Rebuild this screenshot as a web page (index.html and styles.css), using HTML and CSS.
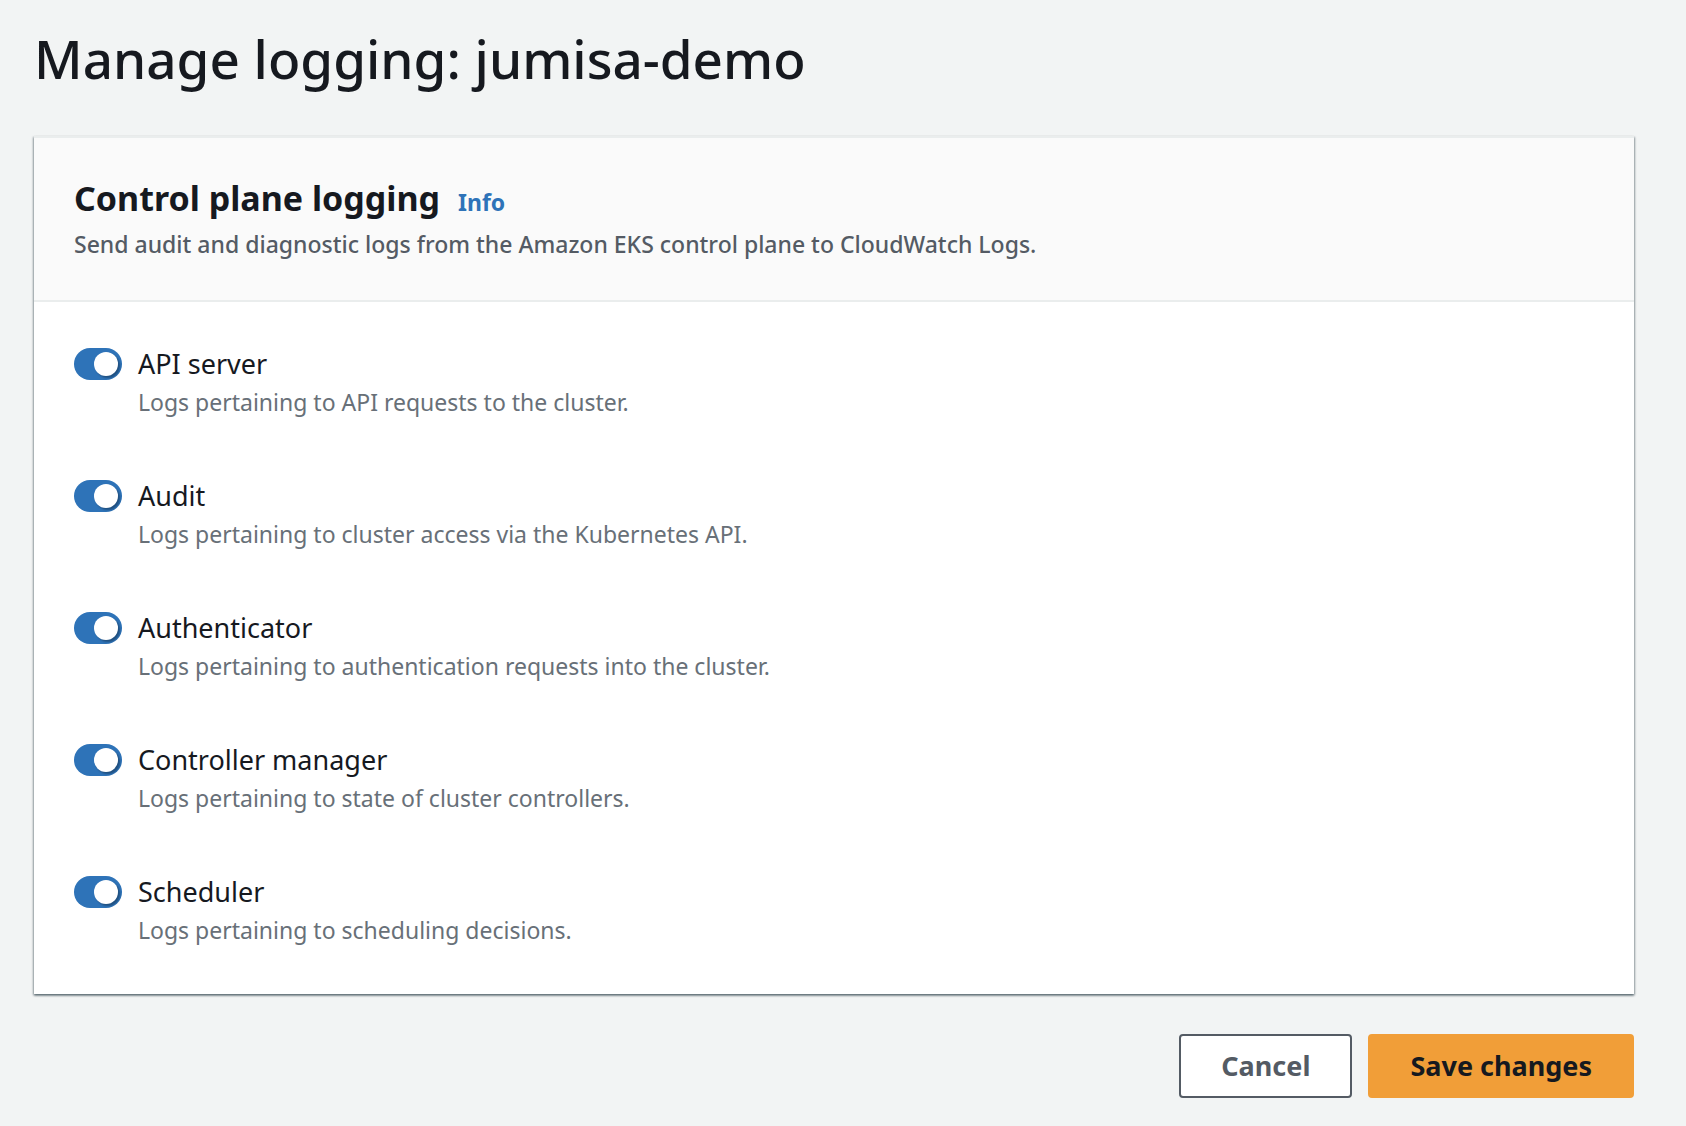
FILE: index.html
```html
<!DOCTYPE html>
<html lang="en">
<head>
  <meta charset="utf-8">
  <meta name="viewport" content="width=device-width, initial-scale=1">
  <title>Manage logging: jumisa-demo</title>
  <link rel="stylesheet" href="styles.css">
</head>
<body>
  <main class="page">
    <h1 class="page-title">Manage logging: jumisa-demo</h1>
    <form class="form">
      <section class="panel">
        <header class="panel-header">
          <div class="panel-heading">
            <h2 class="panel-title">Control plane logging</h2>
            <a class="info-link" href="#">Info</a>
          </div>
          <p class="panel-description">Send audit and diagnostic logs from the Amazon EKS control plane to CloudWatch Logs.</p>
        </header>
        <div class="panel-body">
          <div class="option">
            <input class="toggle" type="checkbox" role="switch" id="api" aria-describedby="api-hint" checked>
            <div class="option-text">
              <label class="option-label" for="api">API server</label>
              <p class="option-hint" id="api-hint">Logs pertaining to API requests to the cluster.</p>
            </div>
          </div>
          <div class="option">
            <input class="toggle" type="checkbox" role="switch" id="audit" aria-describedby="audit-hint" checked>
            <div class="option-text">
              <label class="option-label" for="audit">Audit</label>
              <p class="option-hint" id="audit-hint">Logs pertaining to cluster access via the Kubernetes API.</p>
            </div>
          </div>
          <div class="option">
            <input class="toggle" type="checkbox" role="switch" id="authenticator" aria-describedby="authenticator-hint" checked>
            <div class="option-text">
              <label class="option-label" for="authenticator">Authenticator</label>
              <p class="option-hint" id="authenticator-hint">Logs pertaining to authentication requests into the cluster.</p>
            </div>
          </div>
          <div class="option">
            <input class="toggle" type="checkbox" role="switch" id="controller" aria-describedby="controller-hint" checked>
            <div class="option-text">
              <label class="option-label" for="controller">Controller manager</label>
              <p class="option-hint" id="controller-hint">Logs pertaining to state of cluster controllers.</p>
            </div>
          </div>
          <div class="option">
            <input class="toggle" type="checkbox" role="switch" id="scheduler" aria-describedby="scheduler-hint" checked>
            <div class="option-text">
              <label class="option-label" for="scheduler">Scheduler</label>
              <p class="option-hint" id="scheduler-hint">Logs pertaining to scheduling decisions.</p>
            </div>
          </div>
        </div>
      </section>
      <div class="actions">
        <button class="button" type="button">Cancel</button>
        <button class="button button-primary" type="submit">Save changes</button>
      </div>
    </form>
  </main>
</body>
</html>
```
FILE: styles.css
```css
* {
  box-sizing: border-box;
}

body {
  margin: 0;
  background: #f2f4f4;
  color: #16191f;
  font-family: "Noto Sans", "Open Sans", sans-serif;
  font-weight: 450;
}

h1,
h2,
p {
  margin: 0;
}

.page {
  padding: 24px 52px 24px 34px;
}

.page-title {
  font-size: 53px;
  font-weight: 500;
  line-height: 70px;
}

.form {
  display: flex;
  flex-direction: column;
  gap: 40px;
  margin-top: 42px;
}

.panel {
  border-top: 2px solid #eaeded;
  background: #fff;
  box-shadow: 0 2px 2px rgba(0, 28, 36, 0.3), 1px 1px 2px rgba(0, 28, 36, 0.3), -1px 1px 2px rgba(0, 28, 36, 0.3);
}

.panel-header {
  display: flex;
  flex-direction: column;
  gap: 6px;
  padding: 38px 40px;
  border-bottom: 2px solid #eaeded;
  background: #fafafa;
}

.panel-heading {
  display: flex;
  align-items: baseline;
  gap: 18px;
}

.panel-title {
  font-size: 34px;
  font-weight: 700;
  line-height: 44px;
}

.info-link {
  color: #2e73b8;
  font-size: 23px;
  font-weight: 700;
  line-height: 30px;
  text-decoration: none;
}

.panel-description {
  color: #545b64;
  font-size: 23px;
  font-weight: 500;
  line-height: 36px;
}

.panel-body {
  display: flex;
  flex-direction: column;
  gap: 56px;
  padding: 42px 40px 46px;
}

.option {
  display: flex;
  align-items: flex-start;
  gap: 16px;
}

.option-label {
  display: block;
  font-size: 27px;
  line-height: 40px;
}

.option-hint {
  color: #687078;
  font-size: 23px;
  line-height: 36px;
}

.toggle {
  flex: none;
  appearance: none;
  width: 48px;
  height: 32px;
  margin: 4px 0;
  padding: 4px;
  border-radius: 16px;
  background: #879596;
  cursor: pointer;
}

.toggle::before {
  content: "";
  display: block;
  width: 24px;
  height: 24px;
  border-radius: 50%;
  background: #fff;
  box-shadow: 2px 2px 2px rgba(0, 0, 0, 0.3);
}

.toggle:checked {
  background: #2e73b8;
}

.toggle:checked::before {
  margin-left: 16px;
}

.actions {
  display: flex;
  justify-content: flex-end;
  gap: 16px;
}

.button {
  height: 64px;
  padding: 0 40px;
  border: 2px solid #545b64;
  border-radius: 4px;
  background: #fff;
  color: #545b64;
  font-family: inherit;
  font-size: 27px;
  font-weight: 700;
  line-height: 40px;
  cursor: pointer;
}

.button-primary {
  border-color: #f19e38;
  background: #f19e38;
  color: #16191f;
}
```
